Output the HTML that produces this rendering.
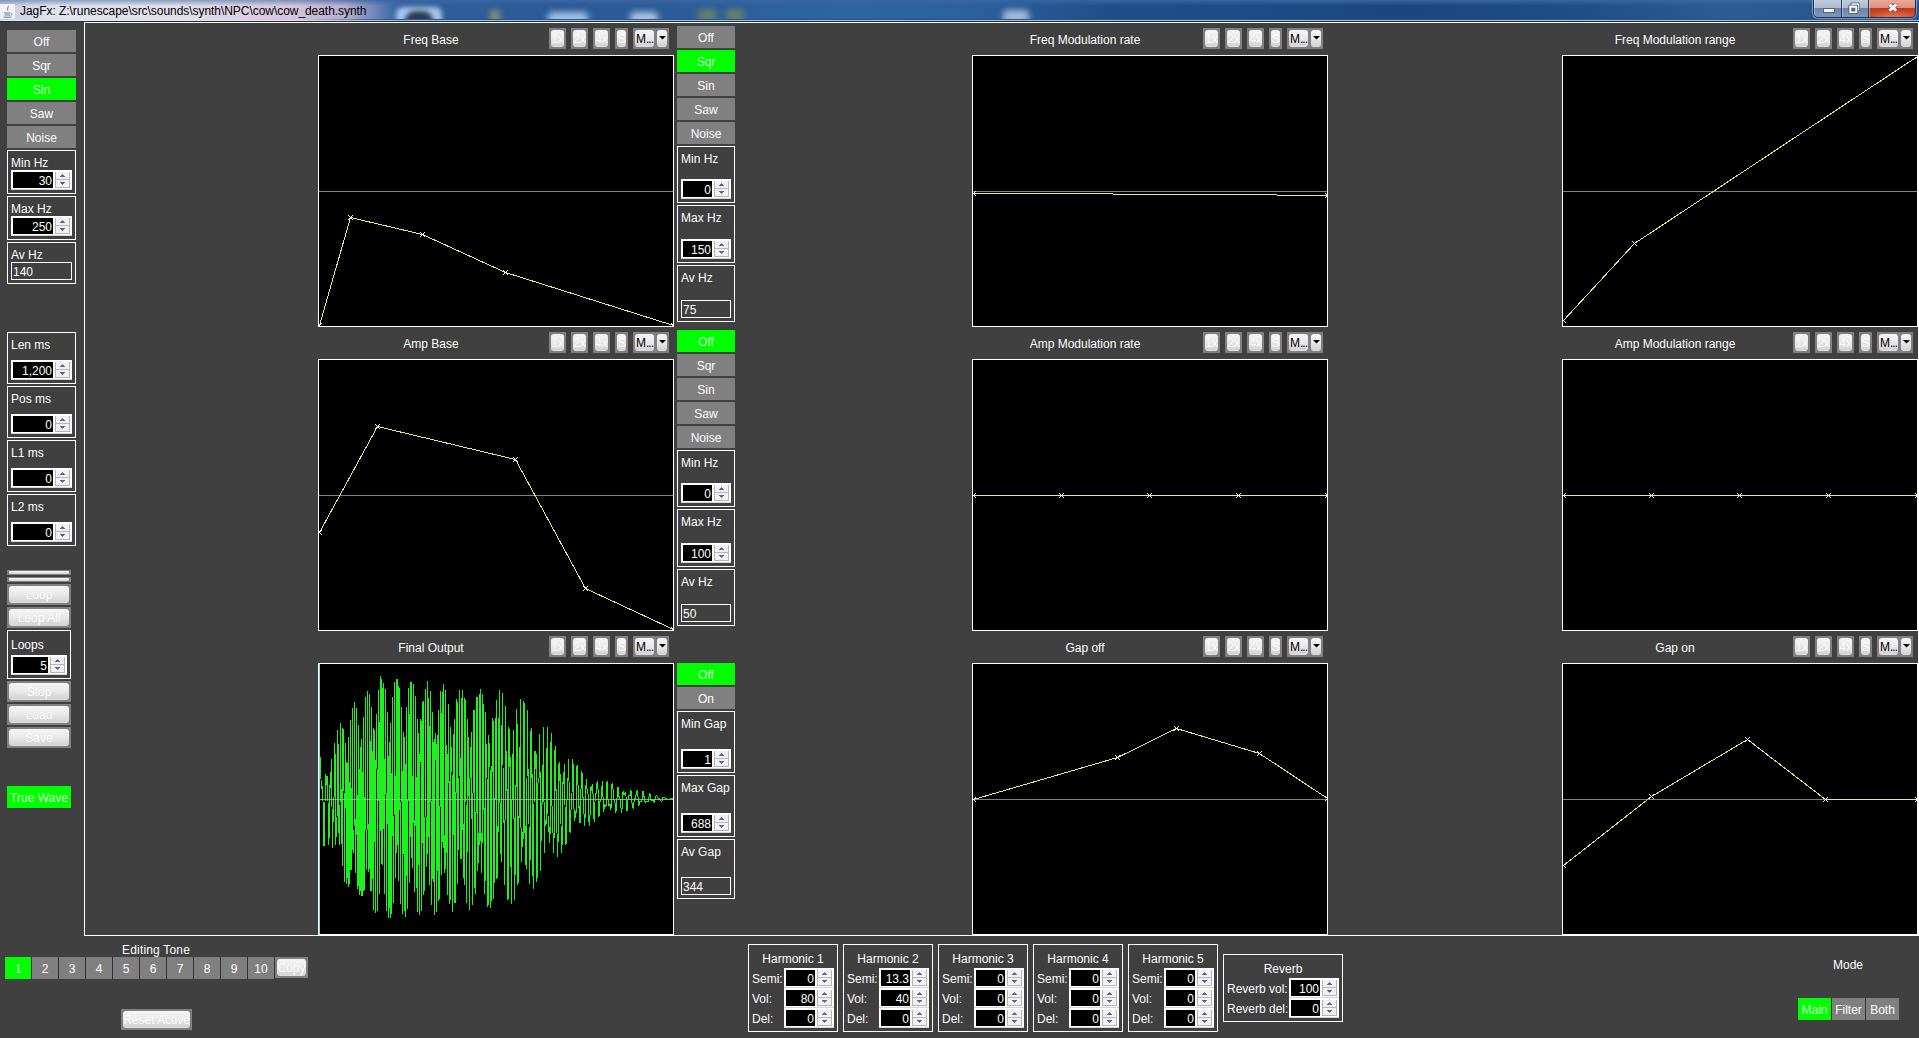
<!DOCTYPE html><html><head><meta charset="utf-8"><title>JagFx</title><style>
*{box-sizing:border-box;margin:0;padding:0}
html,body{width:1919px;height:1038px;overflow:hidden;background:#404040}
body{position:relative;font-family:"Liberation Sans",sans-serif;font-size:12px;color:#fff;line-height:14px}
.a{position:absolute}
.btn{position:absolute;background:#808080;color:#fff;text-align:center;height:22px;line-height:25px;font-size:12px}
.on{background:#00ff00;color:#c8ffc8}
.box{position:absolute;border:1px solid #fff}
.lbl{position:absolute;white-space:nowrap;font-size:12px;line-height:14px;color:#fff}
.sp{position:absolute;height:20px;background:#fff;border-bottom:1px solid #d6d6d6}
.sp .f{position:absolute;left:2px;top:2px;height:16px;background:#000;color:#fff;text-align:right;padding-right:1px;line-height:19px;font-size:12px}
.sp .b{position:absolute;top:2px;width:15px;height:16px;background:#f1f1f6;border-left:1px solid #b4b4b4;border-right:1px solid #b4b4b4;border-bottom:1px solid #b4b4b4}
.sp .b i{position:absolute;left:0;right:0;top:7px;height:1px;background:#b8b8b8}
.sp .b u{position:absolute;left:6px;top:2px;width:1px;height:1px;background:#8484b0;box-shadow:-1px 1px #62629a,0 1px #62629a,1px 1px #62629a,-2px 2px #62629a,-1px 2px #62629a,0 2px #62629a,1px 2px #62629a,2px 2px #62629a}
.sp .b s{position:absolute;left:6px;top:12px;width:1px;height:1px;background:#8484b0;box-shadow:-1px -1px #62629a,0 -1px #62629a,1px -1px #62629a,-2px -2px #62629a,-1px -2px #62629a,0 -2px #62629a,1px -2px #62629a,2px -2px #62629a}
.tf{position:absolute;border:1px solid #fff;height:18px;line-height:19px;padding-left:1px;font-size:12px;color:#fff}
.nb{position:absolute;background:#808080}
.nb b{position:absolute;left:2px;top:2px;right:2px;bottom:2px;border-radius:3px;background:linear-gradient(#f6f6f6,#e9e9e9 50%,#d4d4d4 90%,#e2e2e2);color:#fff;font-weight:normal;text-align:center;font-size:12px;white-space:nowrap;overflow:hidden;text-shadow:0 0 1px #d0d0d0}
.g{position:absolute;width:356px;height:272px;border:1px solid #fff;background:#000;overflow:hidden}
.g svg{position:absolute;left:0;top:0}
.ttl{position:absolute;width:226px;text-align:center;font-size:12px;line-height:14px;white-space:nowrap}
</style></head><body>
<svg width="0" height="0" style="position:absolute"><defs><g id="xm" fill="#fff" shape-rendering="crispEdges"><rect x="-2" y="-2" width="1" height="1"/><rect x="-1" y="-1" width="1" height="1"/><rect x="0" y="0" width="1" height="1"/><rect x="1" y="1" width="1" height="1"/><rect x="2" y="2" width="1" height="1"/><rect x="2" y="-2" width="1" height="1"/><rect x="1" y="-1" width="1" height="1"/><rect x="-1" y="1" width="1" height="1"/><rect x="-2" y="2" width="1" height="1"/></g></defs></svg>
<div class="a" style="left:0;top:0;width:1919px;height:20px;overflow:hidden;background:linear-gradient(90deg,#c3cbde 0,#dfe2ec 50px,#e1dfea 180px,#d6c6da 290px,#b9aed0 345px,#6f86b8 375px,#2f5f9d 400px,#2a5a98 560px,#2b5d9b 700px,#2f65a3 850px,#2c609e 970px,#1f4f8b 1110px,#1a477f 1400px,#1d4b84 1550px,#2b5b93 1720px,#26548b 1919px)">
<div class="a" style="left:0;top:0;width:1919px;height:6px;background:linear-gradient(rgba(58,102,162,.95),rgba(58,102,162,0));-webkit-mask-image:linear-gradient(90deg,rgba(0,0,0,.55) 0,rgba(0,0,0,.6) 300px,#000 400px)"></div>
<div class="a" style="left:396px;top:7px;width:46px;height:20px;border-radius:7px;background:#a9c6ea;filter:blur(2.5px)"></div>
<div class="a" style="left:405px;top:11px;width:28px;height:16px;border-radius:10px 10px 0 0;background:#2c3a52;filter:blur(2.5px)"></div>
<div class="a" style="left:490px;top:10px;width:10px;height:14px;background:#a9a36a;filter:blur(3px);opacity:.7"></div>
<div class="a" style="left:548px;top:12px;width:40px;height:14px;border-radius:4px;background:#9dc0e6;filter:blur(3px)"></div>
<div class="a" style="left:630px;top:12px;width:28px;height:14px;border-radius:5px;background:#c4d6ea;filter:blur(3px);opacity:.85"></div>
<div class="a" style="left:698px;top:9px;width:18px;height:14px;background:#7d9250;filter:blur(3px);opacity:.65"></div>
<div class="a" style="left:726px;top:9px;width:18px;height:14px;background:#7d9250;filter:blur(3px);opacity:.65"></div>
<div class="a" style="left:1003px;top:10px;width:26px;height:14px;border-radius:4px;background:#bfd4e2;filter:blur(3px);opacity:.8"></div>
</div>
<div class="a" style="left:0;top:19px;width:1919px;height:1px;background:linear-gradient(90deg,rgba(42,85,134,0) 0,rgba(42,85,134,0) 300px,#2a5586 400px)"></div>
<div class="a" style="left:0;top:20px;width:1919px;height:1px;background:linear-gradient(90deg,#e9e9f1 0,#e6e0ec 280px,#9fc0e2 400px)"></div>
<div class="a" style="left:0;top:21px;width:1919px;height:1px;background:#1e2c3e"></div>
<div class="a" style="left:-1px;top:4px;width:16px;height:15px;background:#f1f4f6;border-radius:1px"></div>
<svg class="a" style="left:1px;top:5px" width="13" height="14" viewBox="0 0 13 14"><path d="M7 1c1.5 1.5-2 2.5 0 4.5" stroke="#e0762c" stroke-width="1.2" fill="none"/><path d="M3 8h6.5M3.5 10h5.5M2.5 12.2h8" stroke="#5a7fa8" stroke-width="1" fill="none"/><path d="M10 8.5c1.5 0 1.5 2-0.5 2" stroke="#5a7fa8" stroke-width=".8" fill="none"/></svg>
<div class="a" style="left:20px;top:4px;font-size:12px;line-height:15px;color:#000;white-space:nowrap;letter-spacing:-0.05px">JagFx: Z:\runescape\src\sounds\synth\NPC\cow\cow_death.synth</div>
<div class="a" style="left:1813px;top:-3px;width:103px;height:21px;border:1px solid #1c2e48;border-radius:0 0 5px 5px;overflow:hidden;box-shadow:0 0 0 1px rgba(190,210,235,.55)">
<div class="a" style="left:0;top:0;width:28px;height:20px;background:linear-gradient(#c6d0e0 0,#aab9ce 10px,#6b83a6 10px,#8098bb 19px);border-right:1px solid #263a58;box-shadow:inset 1px 0 rgba(255,255,255,.35),inset 0 -1px rgba(255,255,255,.25)"></div>
<div class="a" style="left:28px;top:0;width:27px;height:20px;background:linear-gradient(#c6d0e0 0,#aab9ce 10px,#6b83a6 10px,#8098bb 19px);border-right:1px solid #263a58;box-shadow:inset 1px 0 rgba(255,255,255,.35),inset 0 -1px rgba(255,255,255,.25)"></div>
<div class="a" style="left:55px;top:0;width:48px;height:20px;background:radial-gradient(ellipse 22px 9px at 50% 100%,rgba(255,150,110,.55),rgba(255,150,110,0)),linear-gradient(#ecb2a4 0,#dc8c7b 10px,#c0391f 10px,#cf5436 19px);box-shadow:inset 1px 0 rgba(255,255,255,.35),inset 0 -1px rgba(255,255,255,.25)"></div>
<div class="a" style="left:9px;top:10px;width:12px;height:5px;background:#f4f6fa;border:1px solid #55657e"></div>
<svg class="a" style="left:33px;top:3px" width="16" height="14" viewBox="0 0 16 14"><rect x="3.5" y="1.5" width="9" height="8.5" rx="1" fill="#4a5a72"/><rect x="4.3" y="2.2" width="7.6" height="7.2" rx=".6" fill="#f4f6fa"/><rect x="1.5" y="3.8" width="9.6" height="9" rx="1" fill="#4a5a72"/><rect x="2.3" y="4.6" width="8" height="7.4" rx=".5" fill="#f4f6fa"/><rect x="4.3" y="6.8" width="4" height="3.6" fill="#5a6a82"/></svg>
<svg class="a" style="left:72px;top:4px" width="14" height="12" viewBox="0 0 14 12"><path d="M3.4 2.6L10.2 8.6M10.2 2.6L3.4 8.6" stroke="#5a2a24" stroke-width="4.4" fill="none" opacity=".7"/><path d="M3.4 2.6L10.2 8.6M10.2 2.6L3.4 8.6" stroke="#fafafa" stroke-width="3" fill="none"/></svg>
</div>
<div class="btn" style="left:7px;top:30px;width:69px">Off</div>
<div class="btn" style="left:7px;top:54px;width:69px">Sqr</div>
<div class="btn on" style="left:7px;top:78px;width:69px">Sin</div>
<div class="btn" style="left:7px;top:102px;width:69px">Saw</div>
<div class="btn" style="left:7px;top:126px;width:69px">Noise</div>
<div class="box" style="left:7px;top:150px;width:69px;height:44px"></div>
<div class="lbl" style="left:11px;top:156px;">Min Hz</div>
<div class="sp" style="left:11px;top:170px;width:61px"><div class="f" style="width:40px">30</div><div class="b" style="left:44px"><i></i><u></u><s></s></div></div>
<div class="box" style="left:7px;top:196px;width:69px;height:44px"></div>
<div class="lbl" style="left:11px;top:202px;">Max Hz</div>
<div class="sp" style="left:11px;top:216px;width:61px"><div class="f" style="width:40px">250</div><div class="b" style="left:44px"><i></i><u></u><s></s></div></div>
<div class="box" style="left:7px;top:242px;width:69px;height:42px"></div>
<div class="lbl" style="left:11px;top:248px;">Av Hz</div>
<div class="tf" style="left:11px;top:262px;width:61px">140</div>
<div class="box" style="left:7px;top:332px;width:69px;height:52px"></div>
<div class="lbl" style="left:11px;top:338px;">Len ms</div>
<div class="sp" style="left:11px;top:360px;width:61px"><div class="f" style="width:40px">1,200</div><div class="b" style="left:44px"><i></i><u></u><s></s></div></div>
<div class="box" style="left:7px;top:386px;width:69px;height:52px"></div>
<div class="lbl" style="left:11px;top:392px;">Pos ms</div>
<div class="sp" style="left:11px;top:414px;width:61px"><div class="f" style="width:40px">0</div><div class="b" style="left:44px"><i></i><u></u><s></s></div></div>
<div class="box" style="left:7px;top:440px;width:69px;height:52px"></div>
<div class="lbl" style="left:11px;top:446px;">L1 ms</div>
<div class="sp" style="left:11px;top:468px;width:61px"><div class="f" style="width:40px">0</div><div class="b" style="left:44px"><i></i><u></u><s></s></div></div>
<div class="box" style="left:7px;top:494px;width:69px;height:52px"></div>
<div class="lbl" style="left:11px;top:500px;">L2 ms</div>
<div class="sp" style="left:11px;top:522px;width:61px"><div class="f" style="width:40px">0</div><div class="b" style="left:44px"><i></i><u></u><s></s></div></div>
<div class="nb" style="left:7px;top:570px;width:64px;height:5px"><b style="left:2px;top:1px;right:2px;bottom:1px;border-radius:1px"></b></div>
<div class="nb" style="left:7px;top:577px;width:64px;height:5px"><b style="left:2px;top:1px;right:2px;bottom:1px;border-radius:1px"></b></div>
<div class="nb" style="left:7px;top:584px;width:64px;height:21px"><b style="line-height:19px;">Loop</b></div>
<div class="nb" style="left:7px;top:607px;width:64px;height:21px"><b style="line-height:19px;">Loop All</b></div>
<div class="box" style="left:7px;top:630px;width:64px;height:49px"></div>
<div class="lbl" style="left:11px;top:638px;">Loops</div>
<div class="sp" style="left:11px;top:655px;width:56px"><div class="f" style="width:35px">5</div><div class="b" style="left:39px"><i></i><u></u><s></s></div></div>
<div class="nb" style="left:7px;top:681px;width:64px;height:21px"><b style="line-height:19px;">Stop</b></div>
<div class="nb" style="left:7px;top:704px;width:64px;height:21px"><b style="line-height:19px;">Load</b></div>
<div class="nb" style="left:7px;top:727px;width:64px;height:21px"><b style="line-height:19px;">Save</b></div>
<div class="btn on" style="left:7px;top:786px;width:64px">True Wave</div>
<div class="a" style="left:84px;top:22px;width:1835px;height:914px;border:1px solid #fff"></div>
<div class="ttl" style="left:318px;top:33px">Freq Base</div>
<div class="nb" style="left:549px;top:28px;width:17px;height:21px"><b style="line-height:19px;">1x</b></div>
<div class="nb" style="left:571px;top:28px;width:17px;height:21px"><b style="line-height:19px;">2x</b></div>
<div class="nb" style="left:593px;top:28px;width:17px;height:21px"><b style="line-height:19px;">4x</b></div>
<div class="nb" style="left:615px;top:28px;width:13px;height:21px"><b style="line-height:19px;">S</b></div>
<div class="nb" style="left:633px;top:28px;width:36px;height:21px"><b style="right:auto;width:19px;color:#000;text-shadow:none;text-align:left;padding-left:1px;line-height:19px;border-radius:3px">M<span style="letter-spacing:-1px">...</span></b><b style="left:24px;right:2px;border-radius:3px"></b><svg class="a" style="left:26px;top:8px" width="7" height="4" viewBox="0 0 7 4"><path d="M0 0h7L3.5 3.6z" fill="#000"/></svg></div>
<div class="g" style="left:318px;top:55px"><svg width="354" height="270" viewBox="0 0 354 270" shape-rendering="crispEdges"><path d="M0 135.5H354" stroke="#808080" stroke-width="1"/><polyline points="0.5,269.5 31.5,161.5 103.5,178.5 186.5,216.5 354.5,269.5" fill="none" stroke="#e8e888" stroke-width="1"/><use href="#xm" x="0" y="269"/><use href="#xm" x="31" y="161"/><use href="#xm" x="103" y="178"/><use href="#xm" x="186" y="216"/><use href="#xm" x="354" y="269"/></svg></div>
<div class="ttl" style="left:972px;top:33px">Freq Modulation rate</div>
<div class="nb" style="left:1203px;top:28px;width:17px;height:21px"><b style="line-height:19px;">1x</b></div>
<div class="nb" style="left:1225px;top:28px;width:17px;height:21px"><b style="line-height:19px;">2x</b></div>
<div class="nb" style="left:1247px;top:28px;width:17px;height:21px"><b style="line-height:19px;">4x</b></div>
<div class="nb" style="left:1269px;top:28px;width:13px;height:21px"><b style="line-height:19px;">S</b></div>
<div class="nb" style="left:1287px;top:28px;width:36px;height:21px"><b style="right:auto;width:19px;color:#000;text-shadow:none;text-align:left;padding-left:1px;line-height:19px;border-radius:3px">M<span style="letter-spacing:-1px">...</span></b><b style="left:24px;right:2px;border-radius:3px"></b><svg class="a" style="left:26px;top:8px" width="7" height="4" viewBox="0 0 7 4"><path d="M0 0h7L3.5 3.6z" fill="#000"/></svg></div>
<div class="g" style="left:972px;top:55px"><svg width="354" height="270" viewBox="0 0 354 270" shape-rendering="crispEdges"><path d="M0 135.5H354" stroke="#808080" stroke-width="1"/><polyline points="0.5,137.15 354.5,139.32" fill="none" stroke="#e8e888" stroke-width="1"/><use href="#xm" x="0" y="137"/><use href="#xm" x="354" y="139"/></svg></div>
<div class="ttl" style="left:1562px;top:33px">Freq Modulation range</div>
<div class="nb" style="left:1793px;top:28px;width:17px;height:21px"><b style="line-height:19px;">1x</b></div>
<div class="nb" style="left:1815px;top:28px;width:17px;height:21px"><b style="line-height:19px;">2x</b></div>
<div class="nb" style="left:1837px;top:28px;width:17px;height:21px"><b style="line-height:19px;">4x</b></div>
<div class="nb" style="left:1859px;top:28px;width:13px;height:21px"><b style="line-height:19px;">S</b></div>
<div class="nb" style="left:1877px;top:28px;width:36px;height:21px"><b style="right:auto;width:19px;color:#000;text-shadow:none;text-align:left;padding-left:1px;line-height:19px;border-radius:3px">M<span style="letter-spacing:-1px">...</span></b><b style="left:24px;right:2px;border-radius:3px"></b><svg class="a" style="left:26px;top:8px" width="7" height="4" viewBox="0 0 7 4"><path d="M0 0h7L3.5 3.6z" fill="#000"/></svg></div>
<div class="g" style="left:1562px;top:55px"><svg width="354" height="270" viewBox="0 0 354 270" shape-rendering="crispEdges"><path d="M0 135.5H354" stroke="#808080" stroke-width="1"/><polyline points="0.5,264.5 71.5,187.5 354.5,0.5" fill="none" stroke="#e8e888" stroke-width="1"/><use href="#xm" x="0" y="264"/><use href="#xm" x="71" y="187"/><use href="#xm" x="354" y="0"/></svg></div>
<div class="ttl" style="left:318px;top:337px">Amp Base</div>
<div class="nb" style="left:549px;top:332px;width:17px;height:21px"><b style="line-height:19px;">1x</b></div>
<div class="nb" style="left:571px;top:332px;width:17px;height:21px"><b style="line-height:19px;">2x</b></div>
<div class="nb" style="left:593px;top:332px;width:17px;height:21px"><b style="line-height:19px;">4x</b></div>
<div class="nb" style="left:615px;top:332px;width:13px;height:21px"><b style="line-height:19px;">S</b></div>
<div class="nb" style="left:633px;top:332px;width:36px;height:21px"><b style="right:auto;width:19px;color:#000;text-shadow:none;text-align:left;padding-left:1px;line-height:19px;border-radius:3px">M<span style="letter-spacing:-1px">...</span></b><b style="left:24px;right:2px;border-radius:3px"></b><svg class="a" style="left:26px;top:8px" width="7" height="4" viewBox="0 0 7 4"><path d="M0 0h7L3.5 3.6z" fill="#000"/></svg></div>
<div class="g" style="left:318px;top:359px"><svg width="354" height="270" viewBox="0 0 354 270" shape-rendering="crispEdges"><path d="M0 135.5H354" stroke="#808080" stroke-width="1"/><polyline points="0.5,172.5 58.5,66.5 196.5,99.5 266.5,228.5 354.5,269.5" fill="none" stroke="#e8e888" stroke-width="1"/><use href="#xm" x="0" y="172"/><use href="#xm" x="58" y="66"/><use href="#xm" x="196" y="99"/><use href="#xm" x="266" y="228"/><use href="#xm" x="354" y="269"/></svg></div>
<div class="ttl" style="left:972px;top:337px">Amp Modulation rate</div>
<div class="nb" style="left:1203px;top:332px;width:17px;height:21px"><b style="line-height:19px;">1x</b></div>
<div class="nb" style="left:1225px;top:332px;width:17px;height:21px"><b style="line-height:19px;">2x</b></div>
<div class="nb" style="left:1247px;top:332px;width:17px;height:21px"><b style="line-height:19px;">4x</b></div>
<div class="nb" style="left:1269px;top:332px;width:13px;height:21px"><b style="line-height:19px;">S</b></div>
<div class="nb" style="left:1287px;top:332px;width:36px;height:21px"><b style="right:auto;width:19px;color:#000;text-shadow:none;text-align:left;padding-left:1px;line-height:19px;border-radius:3px">M<span style="letter-spacing:-1px">...</span></b><b style="left:24px;right:2px;border-radius:3px"></b><svg class="a" style="left:26px;top:8px" width="7" height="4" viewBox="0 0 7 4"><path d="M0 0h7L3.5 3.6z" fill="#000"/></svg></div>
<div class="g" style="left:972px;top:359px"><svg width="354" height="270" viewBox="0 0 354 270" shape-rendering="crispEdges"><path d="M0 135.5H354" stroke="#808080" stroke-width="1"/><polyline points="0.5,135.5 88.5,135.5 176.5,135.5 265.5,135.5 354.5,135.5" fill="none" stroke="#e8e888" stroke-width="1"/><use href="#xm" x="0" y="135"/><use href="#xm" x="88" y="135"/><use href="#xm" x="176" y="135"/><use href="#xm" x="265" y="135"/><use href="#xm" x="354" y="135"/></svg></div>
<div class="ttl" style="left:1562px;top:337px">Amp Modulation range</div>
<div class="nb" style="left:1793px;top:332px;width:17px;height:21px"><b style="line-height:19px;">1x</b></div>
<div class="nb" style="left:1815px;top:332px;width:17px;height:21px"><b style="line-height:19px;">2x</b></div>
<div class="nb" style="left:1837px;top:332px;width:17px;height:21px"><b style="line-height:19px;">4x</b></div>
<div class="nb" style="left:1859px;top:332px;width:13px;height:21px"><b style="line-height:19px;">S</b></div>
<div class="nb" style="left:1877px;top:332px;width:36px;height:21px"><b style="right:auto;width:19px;color:#000;text-shadow:none;text-align:left;padding-left:1px;line-height:19px;border-radius:3px">M<span style="letter-spacing:-1px">...</span></b><b style="left:24px;right:2px;border-radius:3px"></b><svg class="a" style="left:26px;top:8px" width="7" height="4" viewBox="0 0 7 4"><path d="M0 0h7L3.5 3.6z" fill="#000"/></svg></div>
<div class="g" style="left:1562px;top:359px"><svg width="354" height="270" viewBox="0 0 354 270" shape-rendering="crispEdges"><path d="M0 135.5H354" stroke="#808080" stroke-width="1"/><polyline points="0.5,135.5 88.5,135.5 176.5,135.5 265.5,135.5 354.5,135.5" fill="none" stroke="#e8e888" stroke-width="1"/><use href="#xm" x="0" y="135"/><use href="#xm" x="88" y="135"/><use href="#xm" x="176" y="135"/><use href="#xm" x="265" y="135"/><use href="#xm" x="354" y="135"/></svg></div>
<div class="ttl" style="left:318px;top:641px">Final Output</div>
<div class="nb" style="left:549px;top:636px;width:17px;height:21px"><b style="line-height:19px;">1x</b></div>
<div class="nb" style="left:571px;top:636px;width:17px;height:21px"><b style="line-height:19px;">2x</b></div>
<div class="nb" style="left:593px;top:636px;width:17px;height:21px"><b style="line-height:19px;">4x</b></div>
<div class="nb" style="left:615px;top:636px;width:13px;height:21px"><b style="line-height:19px;">S</b></div>
<div class="nb" style="left:633px;top:636px;width:36px;height:21px"><b style="right:auto;width:19px;color:#000;text-shadow:none;text-align:left;padding-left:1px;line-height:19px;border-radius:3px">M<span style="letter-spacing:-1px">...</span></b><b style="left:24px;right:2px;border-radius:3px"></b><svg class="a" style="left:26px;top:8px" width="7" height="4" viewBox="0 0 7 4"><path d="M0 0h7L3.5 3.6z" fill="#000"/></svg></div>
<div class="g" style="left:318px;top:663px"><svg width="354" height="270" viewBox="0 0 354 270" shape-rendering="crispEdges"><path d="M0 135.5H354" stroke="#808080" stroke-width="1"/><polyline points="0.00,120.4 0.17,112.0 0.33,104.8 0.50,99.1 0.67,95.1 0.83,92.9 1.00,92.6 1.17,94.1 1.33,97.1 1.50,101.1 1.67,105.9 1.83,110.7 2.00,115.3 2.17,119.1 2.33,122.0 2.50,123.7 2.67,124.2 2.83,124.0 3.00,123.2 3.17,122.5 3.33,122.5 3.50,123.6 3.67,126.3 3.83,130.9 4.00,137.4 4.17,145.5 4.33,154.5 4.50,163.6 4.67,171.8 4.83,178.0 5.00,181.4 5.17,181.4 5.33,177.8 5.50,170.7 5.67,161.0 5.83,149.8 6.00,138.3 6.17,127.7 6.33,119.1 6.50,113.2 6.67,110.4 6.83,110.3 7.00,112.2 7.17,115.2 7.33,118.2 7.50,120.1 7.67,120.4 7.83,119.1 8.00,116.6 8.17,113.6 8.33,111.8 8.50,112.6 8.67,116.9 8.83,125.2 9.00,136.8 9.17,150.2 9.33,163.5 9.50,174.2 9.67,180.2 9.83,180.6 10.00,175.4 10.17,165.7 10.33,153.5 10.50,141.2 10.67,131.0 10.83,124.3 11.00,121.5 11.17,121.7 11.33,123.0 11.50,123.4 11.67,121.2 11.83,115.6 12.00,107.7 12.17,99.8 12.33,95.3 12.50,97.0 12.67,106.3 12.83,122.7 13.00,143.0 13.17,162.9 13.33,177.6 13.50,184.1 13.67,181.4 13.83,172.1 14.00,159.5 14.17,147.7 14.33,139.7 14.50,136.5 14.67,136.7 14.83,137.0 15.00,134.0 15.17,125.2 15.33,111.2 15.50,95.2 15.67,82.5 15.83,78.8 16.00,88.0 16.17,108.8 16.33,135.8 16.50,160.9 16.67,177.1 16.83,181.1 17.00,174.7 17.17,163.9 17.33,155.2 17.50,152.6 17.67,155.1 17.83,157.5 18.00,153.9 18.17,140.3 18.33,117.5 18.50,91.6 18.67,71.7 18.83,65.6 19.00,76.7 19.17,101.5 19.33,131.2 19.50,155.6 19.67,168.5 19.83,168.2 20.00,162.0 20.17,159.1 20.33,164.5 20.50,175.0 20.67,180.7 20.83,171.2 21.00,143.7 21.17,105.8 21.33,72.9 21.50,59.5 21.67,69.0 21.83,94.5 22.00,123.2 22.17,143.2 22.33,150.1 22.50,148.6 22.67,149.3 22.83,160.0 23.00,180.0 23.17,198.5 23.33,201.6 23.50,180.2 23.67,136.8 23.83,91.0 24.00,64.5 24.17,66.9 24.33,89.8 24.50,114.0 24.67,125.2 24.83,124.4 25.00,126.6 25.17,146.0 25.33,180.9 25.50,211.7 25.67,218.4 25.83,194.1 26.00,148.3 26.17,103.1 26.33,78.6 26.50,79.8 26.67,95.1 26.83,106.5 27.00,104.9 27.17,97.7 27.33,102.5 27.50,133.1 27.67,182.2 27.83,220.1 28.00,220.2 28.17,182.2 28.33,132.9 28.50,102.8 28.67,100.4 28.83,107.4 29.00,101.5 29.17,82.0 29.33,73.2 29.50,95.5 29.67,145.5 29.83,197.9 30.00,222.6 30.17,208.1 30.33,170.2 30.50,137.3 30.67,125.8 30.83,127.3 31.00,119.8 31.17,93.1 31.33,61.8 31.50,56.5 31.67,97.6 31.83,162.2 32.00,206.1 32.17,205.6 32.33,176.9 32.50,155.0 32.67,153.7 32.83,153.5 33.00,128.0 33.17,79.6 33.33,44.1 33.50,49.9 33.67,94.5 33.83,150.8 34.00,186.4 34.17,189.4 34.33,174.8 34.50,167.1 34.67,175.2 34.83,183.9 35.00,169.4 35.17,124.7 35.33,67.6 35.50,37.7 35.67,60.0 35.83,113.2 36.00,155.4 36.17,165.5 36.33,160.0 36.50,168.3 36.67,194.2 36.83,208.5 37.00,181.2 37.17,117.7 37.33,62.3 37.50,43.7 37.67,64.8 37.83,103.0 38.00,130.1 38.17,136.0 38.33,135.2 38.50,149.5 38.67,184.0 38.83,218.8 39.00,224.7 39.17,188.8 39.33,121.6 39.50,68.9 39.67,61.3 39.83,86.1 40.00,107.5 40.17,107.5 40.33,104.8 40.50,129.3 40.67,182.9 40.83,230.0 41.00,230.6 41.17,181.5 41.33,124.4 41.50,88.1 41.67,83.5 41.83,95.5 42.00,100.0 42.17,88.1 42.33,74.9 42.50,85.2 42.67,129.2 42.83,189.4 43.00,232.2 43.17,231.8 43.33,186.6 43.50,135.2 43.67,112.2 43.83,114.0 44.00,110.1 44.17,83.0 44.33,53.3 44.50,59.4 44.67,114.2 44.83,186.4 45.00,227.0 45.17,217.1 45.33,182.5 45.50,152.6 45.67,143.1 45.83,144.8 46.00,135.5 46.17,102.6 46.33,58.5 46.50,32.8 46.67,48.7 46.83,102.6 47.00,165.6 47.17,206.4 47.33,202.7 47.50,178.0 47.67,167.4 47.83,175.4 48.00,172.8 48.17,133.2 48.33,69.3 48.50,26.6 48.67,40.4 48.83,100.1 49.00,159.6 49.17,182.0 49.33,178.1 49.50,170.0 49.67,176.8 49.83,196.9 50.00,207.9 50.17,186.9 50.33,132.1 50.50,68.2 50.67,29.8 50.83,35.7 51.00,77.1 51.17,127.7 51.33,149.6 51.50,148.2 51.67,156.3 51.83,190.5 52.00,227.0 52.17,223.6 52.33,166.3 52.50,88.7 52.67,42.9 52.83,51.2 53.00,86.8 53.17,111.8 53.33,116.9 53.50,114.2 53.67,126.3 53.83,164.3 54.00,214.5 54.17,246.3 54.33,235.5 54.50,183.8 54.67,118.6 54.83,73.2 55.00,64.4 55.17,84.3 55.33,96.9 55.50,87.2 55.67,80.2 55.83,110.3 56.00,177.5 56.17,239.5 56.33,249.1 56.50,200.7 56.67,134.8 56.83,97.4 57.00,95.8 57.17,102.4 57.33,95.2 57.50,71.5 57.67,50.5 57.83,58.3 58.00,104.9 58.17,173.5 58.33,230.0 58.50,246.7 58.67,221.2 58.83,176.2 59.00,137.4 59.17,129.7 59.33,129.5 59.50,104.4 59.67,56.3 59.83,25.9 60.00,51.5 60.17,126.8 60.33,201.9 60.50,229.7 60.67,207.5 60.83,174.2 61.00,162.6 61.17,166.5 61.33,165.7 61.50,140.2 61.67,89.2 61.83,36.0 62.00,12.1 62.17,35.0 62.33,93.9 62.50,157.6 62.67,196.0 62.83,199.5 63.00,181.8 63.17,178.1 63.33,195.3 63.50,201.3 63.67,162.5 63.83,87.0 64.00,23.9 64.17,18.6 64.33,70.1 64.50,133.3 64.67,165.0 64.83,164.6 65.00,162.2 65.17,176.6 65.33,206.2 65.50,229.6 65.67,221.8 65.83,174.5 66.00,104.9 66.17,46.1 66.33,24.7 66.50,44.2 66.67,84.3 66.83,120.9 67.00,129.7 67.17,129.2 67.33,153.6 67.50,205.9 67.67,247.3 67.83,234.7 68.00,166.4 68.17,87.3 68.33,48.3 68.50,60.3 68.67,89.9 68.83,100.7 69.00,95.3 69.17,91.6 69.33,110.3 69.50,157.0 69.67,214.7 69.83,253.6 70.00,251.1 70.17,207.5 70.33,146.1 70.50,97.2 70.67,78.3 70.83,87.4 71.00,95.1 71.17,79.3 71.33,59.1 71.50,74.1 71.67,137.6 71.83,215.4 72.00,253.9 72.17,229.9 72.33,170.8 72.50,125.0 72.67,114.1 72.83,117.1 73.00,110.6 73.17,85.2 73.33,51.1 73.50,32.7 73.67,50.2 73.83,104.1 74.00,172.4 74.17,224.1 74.33,238.6 74.50,217.6 74.67,178.7 74.83,152.6 75.00,151.9 75.17,148.1 75.33,112.3 75.50,54.0 75.67,17.7 75.83,40.3 76.00,112.5 76.17,184.9 76.33,213.7 76.50,199.0 76.67,179.0 76.83,174.0 77.00,182.8 77.17,188.6 77.33,171.7 77.50,126.2 77.67,67.1 77.83,22.3 78.00,15.0 78.17,48.6 78.33,104.3 78.50,154.3 78.67,180.7 78.83,175.3 79.00,171.5 79.17,191.3 79.33,216.9 79.50,208.8 79.67,149.9 79.83,70.2 80.00,22.5 80.17,34.9 80.33,86.6 80.50,130.9 80.67,144.4 80.83,143.3 81.00,146.2 81.17,167.1 81.33,203.3 81.50,235.3 81.67,239.6 81.83,205.6 82.00,143.7 82.17,80.7 82.33,43.2 82.50,43.3 82.67,76.9 82.83,106.0 83.00,109.8 83.17,107.2 83.33,131.6 83.50,188.8 83.67,243.3 83.83,249.6 84.00,196.8 84.17,121.0 84.33,72.1 84.50,67.9 84.67,82.7 84.83,94.0 85.00,90.3 85.17,77.1 85.33,72.7 85.50,94.1 85.67,143.3 85.83,203.0 86.00,246.5 86.17,253.3 86.33,222.1 86.50,161.0 86.67,111.8 86.83,99.6 87.00,105.7 87.17,96.6 87.33,65.6 87.50,43.4 87.67,66.6 87.83,136.7 88.00,212.4 88.17,245.0 88.33,221.3 88.50,181.2 88.67,149.3 88.83,136.5 89.00,137.2 89.17,134.7 89.33,114.6 89.50,77.3 89.67,39.3 89.83,23.7 90.00,44.6 90.17,97.7 90.33,163.0 90.50,216.5 90.67,219.1 90.83,190.0 91.00,168.0 91.17,169.5 91.33,173.0 91.50,146.2 91.67,85.8 91.83,28.3 92.00,18.3 92.17,66.6 92.33,133.4 92.50,177.3 92.67,194.3 92.83,188.6 93.00,177.2 93.17,176.1 93.33,189.1 93.50,204.4 93.67,203.0 93.83,172.8 94.00,118.3 94.17,59.8 94.33,20.1 94.50,31.6 94.67,86.0 94.83,138.8 95.00,159.3 95.17,156.5 95.33,162.7 95.50,193.7 95.67,227.6 95.83,224.8 96.00,169.4 96.17,90.1 96.33,42.1 96.50,31.6 96.67,52.0 96.83,86.0 97.00,113.3 97.17,123.6 97.33,122.2 97.50,124.5 97.67,144.3 97.83,182.4 98.00,224.4 98.17,248.4 98.33,229.1 98.50,161.4 98.67,89.1 98.83,55.3 99.00,66.2 99.17,91.0 99.33,98.1 99.50,88.3 99.67,92.0 99.83,134.0 100.00,201.4 100.17,249.4 100.33,250.9 100.50,217.6 100.67,165.2 100.83,117.0 101.00,90.1 101.17,86.7 101.33,94.9 101.50,98.2 101.67,87.5 101.83,67.9 102.00,55.5 102.17,69.8 102.33,129.1 102.50,204.3 102.67,247.1 102.83,233.1 103.00,182.1 103.17,136.5 103.33,121.3 103.50,123.4 103.67,111.8 103.83,75.1 104.00,38.1 104.17,36.8 104.33,70.6 104.50,127.4 104.67,185.9 104.83,224.0 105.00,230.8 105.17,211.4 105.33,182.5 105.50,161.3 105.67,155.2 105.83,158.2 106.00,155.7 106.17,128.1 106.33,73.0 106.50,26.3 106.67,26.6 106.83,80.2 107.00,152.7 107.17,199.4 107.33,202.8 107.50,183.4 107.67,174.0 107.83,184.6 108.00,192.5 108.17,177.0 108.33,137.5 108.50,84.6 108.67,38.1 108.83,17.3 109.00,30.5 109.17,70.3 109.33,118.5 109.50,155.9 109.67,172.5 109.83,171.5 110.00,166.1 110.17,174.2 110.33,201.5 110.50,221.2 110.67,201.1 110.83,138.1 111.00,65.5 111.17,27.5 111.33,42.0 111.50,87.7 111.67,126.4 111.83,138.1 112.00,136.5 112.17,142.9 112.33,165.0 112.50,198.9 112.67,230.0 112.83,241.2 113.00,222.4 113.17,176.6 113.33,119.4 113.50,71.4 113.67,47.6 113.83,50.9 114.00,75.5 114.17,101.6 114.33,106.6 114.50,101.3 114.67,114.2 114.83,159.6 115.00,218.3 115.17,250.6 115.33,230.6 115.50,169.2 115.67,105.9 115.83,75.2 116.00,77.4 116.17,89.1 116.33,96.0 116.50,91.2 116.67,78.2 116.83,69.0 117.00,77.1 117.17,108.6 117.33,157.6 117.50,208.5 117.67,242.7 117.83,248.1 118.00,212.3 118.17,156.1 118.33,116.5 118.50,107.3 118.67,111.5 118.83,102.4 119.00,73.0 119.17,45.7 119.33,52.6 119.50,104.3 119.67,176.8 119.83,227.7 120.00,237.1 120.17,220.9 120.33,190.7 120.50,162.0 120.67,145.4 120.83,142.1 121.00,143.8 121.17,138.6 121.33,118.7 121.50,85.5 121.67,50.1 121.83,27.0 122.00,42.9 122.17,102.0 122.33,170.8 122.50,211.3 122.67,210.4 122.83,186.5 123.00,169.4 123.17,171.7 123.33,178.2 123.50,162.2 123.67,113.9 123.83,61.2 124.00,28.3 124.17,20.4 124.33,41.0 124.50,82.4 124.67,129.3 124.83,166.2 125.00,184.2 125.17,184.5 125.33,176.3 125.50,171.4 125.67,177.0 125.83,195.7 126.00,208.5 126.17,188.3 126.33,131.6 126.50,65.0 126.67,26.5 126.83,36.0 127.00,80.7 127.17,127.4 127.33,150.3 127.50,150.9 127.67,151.9 127.83,165.1 128.00,189.3 128.17,215.6 128.33,231.0 128.50,224.6 128.67,193.7 128.83,145.3 129.00,94.0 129.17,55.3 129.33,39.6 129.50,47.4 129.67,71.7 129.83,104.4 130.00,118.5 130.17,116.6 130.33,121.1 130.50,150.5 130.67,199.5 130.83,239.1 131.00,239.7 131.17,195.0 131.33,129.1 131.50,78.2 131.67,63.4 131.83,70.9 132.00,85.6 132.17,96.5 132.33,97.7 132.50,90.6 132.67,83.5 132.83,86.8 133.00,107.5 133.17,144.8 133.33,189.6 133.50,228.2 133.67,248.4 133.83,227.9 134.00,175.1 134.17,122.6 134.33,96.3 134.50,96.7 134.67,103.1 134.83,94.9 135.00,71.7 135.17,55.1 135.33,70.0 135.50,121.5 135.67,174.9 135.83,216.4 136.00,238.7 136.17,236.8 136.33,214.7 136.50,182.7 136.67,153.0 136.83,134.3 137.00,128.2 137.17,129.3 137.33,128.6 137.50,118.5 137.67,87.7 137.83,50.1 138.00,34.9 138.17,60.8 138.33,120.6 138.50,184.2 138.67,220.0 138.83,216.9 139.00,189.9 139.17,165.4 139.33,159.0 139.50,163.2 139.67,161.1 139.83,146.3 140.00,117.6 140.17,80.4 140.33,46.0 140.50,26.0 140.67,28.4 140.83,53.6 141.00,94.5 141.17,138.9 141.33,174.6 141.50,195.3 141.67,192.6 141.83,177.8 142.00,172.9 142.17,183.7 142.33,195.0 142.50,184.0 142.67,141.1 142.83,80.9 143.00,34.2 143.17,26.3 143.33,58.9 143.50,103.0 143.67,136.4 143.83,157.9 144.00,165.5 144.17,163.7 144.33,160.5 144.50,163.5 144.67,175.9 144.83,195.2 145.00,213.5 145.17,221.1 145.33,210.8 145.50,169.6 145.67,105.9 145.83,52.5 146.00,34.5 146.17,54.3 146.33,92.1 146.50,122.1 146.67,132.0 146.83,130.4 147.00,137.6 147.17,165.7 147.33,206.7 147.50,231.2 147.67,238.5 147.83,225.0 148.00,192.3 148.17,148.3 148.33,104.3 148.50,71.2 148.67,55.5 148.83,57.4 149.00,71.3 149.17,88.5 149.33,101.4 149.50,104.0 149.67,97.7 149.83,102.2 150.00,132.0 150.17,182.2 150.33,229.2 150.50,246.2 150.67,222.1 150.83,169.6 151.00,116.3 151.17,86.1 151.33,83.0 151.50,90.0 151.67,97.2 151.83,98.1 152.00,91.0 152.17,78.8 152.33,68.7 152.50,68.5 152.67,83.6 152.83,114.3 153.00,155.3 153.17,196.9 153.33,233.3 153.50,241.4 153.67,212.7 153.83,167.1 154.00,129.9 154.17,115.0 154.33,116.3 154.50,115.7 154.67,99.1 154.83,69.4 155.00,45.9 155.17,50.1 155.33,78.3 155.50,118.0 155.67,162.1 155.83,200.3 156.00,224.1 156.17,229.7 156.33,218.7 156.50,197.6 156.67,174.6 156.83,157.0 157.00,148.4 157.17,147.6 157.33,149.3 157.50,138.9 157.67,107.5 157.83,64.5 158.00,33.0 158.17,34.1 158.33,72.0 158.50,130.3 158.67,181.9 158.83,206.5 159.00,201.8 159.17,183.8 159.33,173.1 159.50,169.4 159.67,172.7 159.83,179.1 160.00,182.1 160.17,175.4 160.33,155.9 160.50,124.8 160.67,87.7 160.83,53.3 161.00,30.3 161.17,25.5 161.33,53.2 161.50,102.9 161.67,149.9 161.83,175.2 162.00,177.1 162.17,169.5 162.33,169.7 162.50,184.4 162.67,204.0 162.83,209.3 163.00,185.7 163.17,144.1 163.33,103.2 163.50,65.6 163.67,39.5 163.83,30.3 164.00,38.5 164.17,60.1 164.33,88.2 164.50,114.8 164.67,134.2 164.83,143.8 165.00,145.5 165.17,143.7 165.33,150.6 165.50,174.3 165.67,207.1 165.83,229.6 166.00,223.3 166.17,184.1 166.33,126.0 166.50,73.6 166.67,47.7 166.83,53.4 167.00,78.5 167.17,97.6 167.33,109.8 167.50,114.4 167.67,113.3 167.83,110.9 168.00,113.1 168.17,124.1 168.33,145.2 168.50,173.9 168.67,204.5 168.83,229.5 169.00,242.5 169.17,230.1 169.33,186.9 169.50,132.0 169.67,88.7 169.83,71.1 170.00,77.1 170.17,91.7 170.33,98.6 170.50,92.3 170.67,81.4 170.83,82.4 171.00,103.1 171.17,132.1 171.33,167.7 171.50,202.9 171.67,230.1 171.83,243.5 172.00,240.3 172.17,222.0 172.33,193.4 172.50,161.3 172.67,132.7 172.83,112.5 173.00,101.8 173.17,103.7 173.33,107.6 173.50,100.3 173.67,80.2 173.83,59.1 174.00,54.5 174.17,78.1 174.33,126.8 174.50,182.9 174.67,223.9 174.83,234.7 175.00,222.3 175.17,201.3 175.33,177.1 175.50,155.9 175.67,141.5 175.83,135.0 176.00,134.4 176.17,135.7 176.33,133.9 176.50,125.5 176.67,109.3 176.83,87.1 177.00,54.5 177.17,35.6 177.33,45.8 177.50,85.6 177.67,140.8 177.83,189.5 178.00,214.6 178.17,212.1 178.33,192.2 178.50,171.5 178.67,162.4 178.83,164.8 179.00,168.1 179.17,167.4 179.33,158.9 179.50,141.0 179.67,114.9 179.83,84.5 180.00,55.7 180.17,34.8 180.33,26.5 180.50,33.0 180.67,53.3 180.83,89.6 181.00,139.3 181.17,176.1 181.33,190.0 181.50,185.0 181.67,174.4 181.83,171.4 182.00,180.5 182.17,194.0 182.33,197.5 182.50,179.0 182.67,138.0 182.83,95.0 183.00,63.0 183.17,39.7 183.33,29.0 183.50,32.6 183.67,48.7 183.83,73.4 184.00,101.2 184.17,126.5 184.33,145.3 184.50,155.8 184.67,158.8 184.83,156.4 185.00,156.1 185.17,167.6 185.33,190.5 185.50,213.6 185.67,221.4 185.83,203.3 186.00,160.7 186.17,107.3 186.33,62.5 186.50,41.6 186.67,48.5 186.83,65.6 187.00,85.4 187.17,104.0 187.33,117.6 187.50,124.9 187.67,126.6 187.83,125.3 188.00,125.0 188.17,129.1 188.33,140.1 188.50,158.0 188.67,182.3 188.83,216.7 189.00,235.8 189.17,227.9 189.33,192.7 189.50,142.3 189.67,95.3 189.83,67.1 190.00,63.1 190.17,76.5 190.33,93.8 190.50,102.9 190.67,101.4 190.83,97.0 191.00,93.4 191.17,94.5 191.33,103.1 191.50,120.4 191.67,145.3 191.83,174.4 192.00,203.1 192.17,226.3 192.33,239.5 192.50,240.4 192.67,223.7 192.83,184.4 193.00,139.6 193.17,105.4 193.33,90.5 193.50,92.3 193.67,99.8 193.83,101.3 194.00,91.7 194.17,75.7 194.33,65.7 194.50,73.8 194.67,94.8 194.83,122.3 195.00,154.5 195.17,186.5 195.33,213.3 195.50,230.7 195.67,236.4 195.83,230.3 196.00,214.3 196.17,192.3 196.33,168.7 196.50,147.8 196.67,127.0 196.83,121.2 197.00,123.0 197.17,121.0 197.33,107.3 197.50,82.7 197.67,57.2 197.83,45.0 198.00,56.5 198.17,92.3 198.33,141.8 198.50,186.6 198.67,208.4 198.83,219.9 199.00,220.9 199.17,212.7 199.33,198.5 199.50,182.3 199.67,167.7 199.83,157.4 200.00,152.3 200.17,151.7 200.33,153.4 200.50,154.0 200.67,145.2 200.83,121.1 201.00,86.0 201.17,52.4 201.33,34.9 201.50,42.7 201.67,75.0 201.83,120.7 202.00,163.8 202.17,191.0 202.33,197.6 202.50,190.9 202.67,182.2 202.83,174.0 203.00,169.0 203.17,168.4 203.33,171.7 203.50,177.1 203.67,181.8 203.83,182.7 204.00,177.4 204.17,164.4 204.33,144.2 204.50,107.3 204.67,66.6 204.83,40.0 205.00,37.2 205.17,58.7 205.33,95.2 205.50,132.5 205.67,158.6 205.83,168.6 206.00,166.5 206.17,162.0 206.33,164.3 206.50,171.1 206.67,181.1 206.83,192.2 207.00,201.3 207.17,205.4 207.33,202.2 207.50,190.4 207.67,170.7 207.83,144.9 208.00,116.3 208.17,88.8 208.33,64.8 208.50,46.5 208.67,51.2 208.83,73.6 209.00,102.3 209.17,125.7 209.33,137.3 209.50,138.7 209.67,137.7 209.83,143.2 210.00,159.9 210.17,184.9 210.33,206.0 210.50,216.4 210.67,219.6 210.83,214.1 211.00,199.9 211.17,178.3 211.33,152.0 211.50,124.5 211.67,99.5 211.83,79.9 212.00,67.7 212.17,63.6 212.33,68.9 212.50,85.2 212.67,102.5 212.83,112.7 213.00,113.7 213.17,110.5 213.33,111.7 213.50,124.5 213.67,150.3 213.83,183.0 214.00,211.5 214.17,224.7 214.33,220.8 214.50,208.4 214.67,189.3 214.83,166.0 215.00,141.9 215.17,120.1 215.33,102.9 215.50,92.0 215.67,87.4 215.83,88.3 216.00,92.7 216.17,98.5 216.33,105.0 216.50,104.0 216.67,96.2 216.83,88.1 217.00,88.2 217.17,102.8 217.33,131.8 217.50,168.0 217.67,200.5 217.83,218.4 218.00,216.5 218.17,197.9 218.33,180.0 218.50,160.9 218.67,143.2 218.83,129.0 219.00,119.3 219.17,114.5 219.33,113.6 219.50,114.9 219.67,116.7 219.83,117.0 220.00,114.6 220.17,107.1 220.33,91.8 220.50,76.7 220.67,70.4 220.83,79.4 221.00,104.5 221.17,139.7 221.33,174.8 221.50,199.5 221.67,207.4 221.83,198.7 222.00,179.7 222.17,162.7 222.33,151.8 222.50,144.0 222.67,139.8 222.83,138.6 223.00,139.2 223.17,139.8 223.33,138.8 223.50,134.9 223.67,127.5 223.83,116.6 224.00,103.2 224.17,82.9 224.33,66.2 224.50,63.1 224.67,76.7 224.83,104.3 225.00,137.7 225.17,167.3 225.33,185.2 225.50,188.8 225.67,181.1 225.83,168.9 226.00,159.2 226.17,156.5 226.33,156.4 226.50,158.1 226.67,160.4 226.83,161.8 227.00,160.7 227.17,156.1 227.33,147.4 227.50,134.8 227.67,119.3 227.83,102.7 228.00,85.7 228.17,67.1 228.33,62.6 228.50,74.0 228.67,97.6 228.83,125.6 229.00,149.8 229.17,164.1 229.33,167.7 229.50,164.0 229.67,159.0 229.83,158.1 230.00,162.1 230.17,167.0 230.33,172.4 230.50,176.8 230.67,178.7 230.83,177.1 231.00,171.1 231.17,160.6 231.33,146.4 231.50,129.7 231.67,112.3 231.83,95.9 232.00,79.1 232.17,69.5 232.33,74.2 232.50,90.2 232.67,111.2 232.83,130.1 233.00,142.0 233.17,146.0 233.33,145.1 233.50,144.5 233.67,148.6 233.83,158.9 234.00,168.6 234.17,177.1 234.33,184.1 234.50,188.3 234.67,188.7 234.83,184.6 235.00,175.9 235.17,163.4 235.33,148.0 235.50,131.4 235.67,115.3 235.83,101.3 236.00,85.8 236.17,82.2 236.33,89.3 236.50,102.3 236.67,115.4 236.83,124.2 237.00,127.1 237.17,126.3 237.33,126.1 237.50,130.8 237.67,142.3 237.83,158.4 238.00,169.4 238.17,179.5 238.33,187.3 238.50,191.8 238.67,192.0 238.83,187.9 239.00,179.6 239.17,168.1 239.33,154.3 239.50,139.9 239.67,126.2 239.83,112.0 240.00,100.5 240.17,98.3 240.33,103.1 240.50,110.4 240.67,115.8 240.83,116.9 241.00,114.1 241.17,110.7 241.33,110.9 241.50,118.0 241.67,132.6 241.83,148.1 242.00,160.3 242.17,171.6 242.33,180.8 242.50,187.0 242.67,189.3 242.83,187.8 243.00,182.5 243.17,174.2 243.33,163.8 243.50,152.4 243.67,141.4 243.83,127.5 244.00,118.0 244.17,115.3 244.33,117.1 244.50,119.6 244.67,119.5 244.83,115.4 245.00,108.4 245.17,101.8 245.33,99.6 245.50,104.8 245.67,118.0 245.83,128.8 246.00,140.7 246.17,152.6 246.33,163.4 246.50,172.2 246.67,178.2 246.83,180.9 247.00,180.3 247.17,176.8 247.33,170.9 247.50,163.6 247.67,155.0 247.83,142.9 248.00,134.9 248.17,131.6 248.33,131.7 248.50,132.1 248.67,130.0 248.83,123.7 249.00,114.1 249.17,103.6 249.33,96.2 249.50,95.2 249.67,100.6 249.83,107.6 250.00,116.7 250.17,127.1 250.33,137.8 250.50,148.0 250.67,156.7 250.83,163.4 251.00,167.7 251.17,169.3 251.33,168.6 251.50,165.9 251.67,160.4 251.83,152.5 252.00,146.4 252.17,143.7 252.33,143.8 252.50,144.9 252.67,144.1 252.83,139.5 253.00,130.5 253.17,118.4 253.33,106.4 253.50,97.8 253.67,95.5 253.83,96.3 254.00,99.6 254.17,105.1 254.33,112.3 254.50,120.6 254.67,129.3 254.83,137.5 255.00,144.6 255.17,150.3 255.33,154.1 255.50,156.0 255.67,155.8 255.83,152.6 256.00,149.1 256.17,147.4 256.33,148.2 256.50,150.9 256.67,153.5 256.83,153.6 257.00,149.5 257.17,140.9 257.33,128.9 257.50,116.9 257.67,110.4 257.83,105.3 258.00,102.1 258.17,100.8 258.33,101.7 258.50,104.5 258.67,108.9 258.83,114.4 259.00,120.5 259.17,126.6 259.33,132.3 259.50,138.1 259.67,142.9 259.83,144.3 260.00,143.6 260.17,142.7 260.33,143.1 260.50,145.9 260.67,150.6 260.83,155.5 261.00,158.6 261.17,158.0 261.33,152.7 261.50,145.6 261.67,139.2 261.83,132.3 262.00,125.5 262.17,119.2 262.33,114.0 262.50,110.2 262.67,108.0 262.83,107.4 263.00,108.5 263.17,110.9 263.33,114.2 263.50,120.4 263.67,127.1 263.83,132.0 264.00,134.3 264.17,134.6 264.33,134.3 264.50,134.9 264.67,137.7 264.83,142.9 265.00,149.8 265.17,156.4 265.33,160.8 265.50,161.6 265.67,160.8 265.83,158.4 266.00,154.7 266.17,149.8 266.33,144.1 266.50,138.0 266.67,132.0 266.83,126.4 267.00,121.7 267.17,118.1 267.33,115.7 267.50,114.8 267.67,117.1 267.83,121.0 268.00,124.9 268.17,127.3 268.33,127.9 268.50,127.1 268.67,126.3 268.83,126.7 269.00,129.7 269.17,135.3 269.33,141.6 269.50,146.2 269.67,150.7 269.83,154.8 270.00,158.0 270.17,160.1 270.33,160.9 270.50,160.4 270.67,158.5 270.83,155.5 271.00,151.5 271.17,146.9 271.33,140.2 271.50,132.2 271.67,126.3 271.83,123.2 272.00,122.8 272.17,124.2 272.33,125.9 272.50,126.9 272.67,126.3 272.83,124.4 273.00,122.1 273.17,120.5 273.33,120.6 273.50,121.7 273.67,123.6 273.83,126.5 274.00,130.1 274.17,134.4 274.33,139.0 274.50,143.6 274.67,147.9 274.83,151.7 275.00,154.7 275.17,156.6 275.33,157.5 275.50,155.1 275.67,150.1 275.83,143.9 276.00,138.0 276.17,133.5 276.33,131.1 276.50,130.5 276.67,130.9 276.83,131.2 277.00,130.5 277.17,128.5 277.33,126.8 277.50,124.8 277.67,122.7 277.83,120.8 278.00,119.1 278.17,118.0 278.33,117.6 278.50,118.1 278.67,119.4 278.83,121.6 279.00,124.5 279.17,129.2 279.33,136.6 279.50,143.7 279.67,149.2 279.83,152.2 280.00,152.3 280.17,150.1 280.33,146.5 280.50,142.6 280.67,139.4 280.83,137.5 281.00,136.9 281.17,137.1 281.33,137.2 281.50,137.3 281.67,137.1 281.83,136.5 282.00,135.4 282.17,133.9 282.33,131.9 282.50,129.6 282.67,127.0 282.83,124.3 283.00,121.8 283.17,118.6 283.33,116.7 283.50,117.4 283.67,120.8 283.83,126.2 284.00,132.6 284.17,138.9 284.33,143.8 284.50,146.8 284.67,147.6 284.83,146.6 285.00,144.6 285.17,143.2 285.33,142.2 285.50,141.3 285.67,140.8 285.83,140.6 286.00,140.7 286.17,141.1 286.33,141.5 286.50,142.0 286.67,142.4 286.83,142.4 287.00,142.1 287.17,140.3 287.33,136.8 287.50,132.0 287.67,126.7 287.83,121.8 288.00,118.4 288.17,117.3 288.33,118.5 288.50,121.9 288.67,126.7 288.83,131.9 289.00,135.9 289.17,138.0 289.33,139.7 289.50,141.0 289.67,141.7 289.83,142.0 290.00,141.9 290.17,141.6 290.33,141.2 290.50,140.7 290.67,140.3 290.83,140.1 291.00,140.3 291.17,141.3 291.33,143.0 291.50,144.7 291.67,145.9 291.83,145.9 292.00,144.1 292.17,140.6 292.33,135.8 292.50,130.4 292.67,125.4 292.83,121.7 293.00,120.2 293.17,119.7 293.33,119.8 293.50,120.5 293.67,121.6 293.83,123.2 294.00,125.0 294.17,127.0 294.33,129.0 294.50,130.9 294.67,132.7 294.83,134.1 295.00,135.8 295.17,136.6 295.33,136.7 295.50,136.5 295.67,136.6 295.83,137.4 296.00,139.1 296.17,141.6 296.33,144.3 296.50,146.6 296.67,147.8 296.83,147.6 297.00,146.8 297.17,145.5 297.33,143.7 297.50,141.6 297.67,139.1 297.83,136.6 298.00,134.0 298.17,131.5 298.33,129.2 298.50,127.2 298.67,125.6 298.83,124.1 299.00,123.4 299.17,124.2 299.33,125.9 299.50,128.2 299.67,130.2 299.83,131.7 300.00,132.5 300.17,132.6 300.33,132.3 300.50,132.2 300.67,132.7 300.83,133.6 301.00,134.6 301.17,135.9 301.33,137.3 301.50,139.0 301.67,140.7 301.83,142.4 302.00,144.0 302.17,145.5 302.33,146.6 302.50,147.4 302.67,147.8 302.83,147.6 303.00,145.9 303.17,142.9 303.33,139.1 303.50,135.2 303.67,131.7 303.83,129.1 304.00,127.7 304.17,127.4 304.33,128.0 304.50,129.0 304.67,130.0 304.83,130.5 305.00,130.8 305.17,130.9 305.33,130.8 305.50,130.6 305.67,130.3 305.83,130.0 306.00,129.6 306.17,129.3 306.33,129.1 306.50,129.0 306.67,129.2 306.83,130.3 307.00,132.3 307.17,135.2 307.33,138.5 307.50,141.8 307.67,144.5 307.83,146.3 308.00,146.7 308.17,145.9 308.33,143.9 308.50,141.2 308.67,138.7 308.83,137.2 309.00,135.8 309.17,134.5 309.33,133.4 309.50,132.6 309.67,132.0 309.83,131.6 310.00,131.4 310.17,131.4 310.33,131.5 310.50,131.7 310.67,131.9 310.83,132.1 311.00,132.0 311.17,131.3 311.33,130.2 311.50,128.9 311.67,127.8 311.83,127.2 312.00,127.3 312.17,128.5 312.33,130.5 312.50,133.3 312.67,135.3 312.83,136.9 313.00,138.5 313.17,140.0 313.33,141.4 313.50,142.5 313.67,143.4 313.83,144.0 314.00,144.3 314.17,144.3 314.33,144.1 314.50,143.6 314.67,142.3 314.83,140.5 315.00,138.6 315.17,136.9 315.33,135.7 315.50,135.0 315.67,134.8 315.83,134.8 316.00,134.9 316.17,134.8 316.33,134.2 316.50,133.3 316.67,132.6 316.83,131.8 317.00,131.0 317.17,130.1 317.33,129.3 317.50,128.5 317.67,127.9 317.83,127.3 318.00,127.0 318.17,126.8 318.33,126.9 318.50,127.3 318.67,128.6 318.83,130.6 319.00,133.0 319.17,135.6 319.33,138.0 319.50,139.9 319.67,141.0 319.83,141.5 320.00,141.3 320.17,140.5 320.33,139.5 320.50,138.7 320.67,138.2 320.83,137.8 321.00,137.5 321.17,137.2 321.33,137.0 321.50,137.0 321.67,137.0 321.83,137.0 322.00,137.1 322.17,137.2 322.33,137.3 322.50,137.3 322.67,137.0 322.83,136.3 323.00,135.2 323.17,133.7 323.33,132.0 323.50,130.3 323.67,128.8 323.83,127.9 324.00,127.6 324.17,127.9 324.33,129.0 324.50,129.7 324.67,130.6 324.83,131.5 325.00,132.5 325.17,133.4 325.33,134.4 325.50,135.3 325.67,136.1 325.83,136.8 326.00,137.4 326.17,137.8 326.33,138.2 326.50,138.5 326.67,138.5 326.83,138.1 327.00,137.7 327.17,137.4 327.33,137.2 327.50,137.3 327.67,137.5 327.83,137.9 328.00,138.3 328.17,138.6 328.33,138.6 328.50,138.5 328.67,138.2 328.83,137.9 329.00,137.5 329.17,136.9 329.33,136.3 329.50,135.6 329.67,134.9 329.83,134.2 330.00,133.4 330.17,132.7 330.33,131.6 330.50,130.5 330.67,129.7 330.83,129.4 331.00,129.6 331.17,130.3 331.33,131.2 331.50,132.4 331.67,133.5 331.83,134.5 332.00,135.4 332.17,135.9 332.33,136.1 332.50,136.2 332.67,136.2 332.83,136.2 333.00,136.2 333.17,136.1 333.33,136.1 333.50,136.0 333.67,136.0 333.83,136.0 334.00,136.0 334.17,136.1 334.33,136.4 334.50,136.8 334.67,137.3 334.83,137.8 335.00,138.3 335.17,138.5 335.33,138.5 335.50,138.2 335.67,137.6 335.83,136.7 336.00,135.6 336.17,134.6 336.33,134.0 336.50,133.5 336.67,133.0 336.83,132.6 337.00,132.3 337.17,132.0 337.33,131.8 337.50,131.7 337.67,131.6 337.83,131.7 338.00,131.7 338.17,131.9 338.33,132.4 338.50,132.9 338.67,133.4 338.83,133.9 339.00,134.3 339.17,134.6 339.33,134.8 339.50,134.8 339.67,134.8 339.83,134.7 340.00,134.8 340.17,134.9 340.33,134.9 340.50,135.1 340.67,135.2 340.83,135.4 341.00,135.6 341.17,135.8 341.33,136.0 341.50,136.2 341.67,136.4 341.83,136.7 342.00,136.9 342.17,137.2 342.33,137.4 342.50,137.5 342.67,137.4 342.83,137.1 343.00,136.7 343.17,136.1 343.33,135.5 343.50,134.9 343.67,134.4 343.83,133.9 344.00,133.6 344.17,133.6 344.33,133.5 344.50,133.5 344.67,133.5 344.83,133.6 345.00,133.6 345.17,133.7 345.33,133.8 345.50,133.9 345.67,134.0 345.83,134.1 346.00,134.2 346.17,134.3 346.33,134.5 346.50,134.5 346.67,134.5 346.83,134.5 347.00,134.4 347.17,134.4 347.33,134.4 347.50,134.5 347.67,134.6 347.83,134.8 348.00,135.0 348.17,135.1 348.33,135.2 348.50,135.3 348.67,135.5 348.83,135.6 349.00,135.7 349.17,135.7 349.33,135.8 349.50,135.8 349.67,135.9 349.83,135.9 350.00,135.9 350.17,135.9 350.33,135.8 350.50,135.7 350.67,135.5 350.83,135.3 351.00,135.2 351.17,135.0 351.33,134.9 351.50,134.8 351.67,134.8 351.83,134.8 352.00,134.8 352.17,134.8 352.33,134.8 352.50,134.9 352.67,134.9 352.83,134.9 353.00,134.9 353.17,134.9 353.33,134.9 353.50,135.0 353.67,135.0 353.83,135.0 354.00,135.0" fill="none" stroke="#1ff01f" stroke-width="1" shape-rendering="crispEdges"/><path d="M0 135.5H354" stroke="#a0dca0" stroke-width="1" opacity=".42"/><path d="M0.5 0V270" stroke="#7fdcec" stroke-width="1"/></svg></div>
<div class="ttl" style="left:972px;top:641px">Gap off</div>
<div class="nb" style="left:1203px;top:636px;width:17px;height:21px"><b style="line-height:19px;">1x</b></div>
<div class="nb" style="left:1225px;top:636px;width:17px;height:21px"><b style="line-height:19px;">2x</b></div>
<div class="nb" style="left:1247px;top:636px;width:17px;height:21px"><b style="line-height:19px;">4x</b></div>
<div class="nb" style="left:1269px;top:636px;width:13px;height:21px"><b style="line-height:19px;">S</b></div>
<div class="nb" style="left:1287px;top:636px;width:36px;height:21px"><b style="right:auto;width:19px;color:#000;text-shadow:none;text-align:left;padding-left:1px;line-height:19px;border-radius:3px">M<span style="letter-spacing:-1px">...</span></b><b style="left:24px;right:2px;border-radius:3px"></b><svg class="a" style="left:26px;top:8px" width="7" height="4" viewBox="0 0 7 4"><path d="M0 0h7L3.5 3.6z" fill="#000"/></svg></div>
<div class="g" style="left:972px;top:663px"><svg width="354" height="270" viewBox="0 0 354 270" shape-rendering="crispEdges"><path d="M0 135.5H354" stroke="#808080" stroke-width="1"/><polyline points="0.5,135.5 144.5,93.5 203.5,64.5 286.5,89.5 354.5,134.5" fill="none" stroke="#e8e888" stroke-width="1"/><use href="#xm" x="0" y="135"/><use href="#xm" x="144" y="93"/><use href="#xm" x="203" y="64"/><use href="#xm" x="286" y="89"/><use href="#xm" x="354" y="134"/></svg></div>
<div class="ttl" style="left:1562px;top:641px">Gap on</div>
<div class="nb" style="left:1793px;top:636px;width:17px;height:21px"><b style="line-height:19px;">1x</b></div>
<div class="nb" style="left:1815px;top:636px;width:17px;height:21px"><b style="line-height:19px;">2x</b></div>
<div class="nb" style="left:1837px;top:636px;width:17px;height:21px"><b style="line-height:19px;">4x</b></div>
<div class="nb" style="left:1859px;top:636px;width:13px;height:21px"><b style="line-height:19px;">S</b></div>
<div class="nb" style="left:1877px;top:636px;width:36px;height:21px"><b style="right:auto;width:19px;color:#000;text-shadow:none;text-align:left;padding-left:1px;line-height:19px;border-radius:3px">M<span style="letter-spacing:-1px">...</span></b><b style="left:24px;right:2px;border-radius:3px"></b><svg class="a" style="left:26px;top:8px" width="7" height="4" viewBox="0 0 7 4"><path d="M0 0h7L3.5 3.6z" fill="#000"/></svg></div>
<div class="g" style="left:1562px;top:663px"><svg width="354" height="270" viewBox="0 0 354 270" shape-rendering="crispEdges"><path d="M0 135.5H354" stroke="#808080" stroke-width="1"/><polyline points="0.5,201.5 88.5,132.5 184.5,75.5 262.5,135.5 354.5,135.5" fill="none" stroke="#e8e888" stroke-width="1"/><use href="#xm" x="0" y="201"/><use href="#xm" x="88" y="132"/><use href="#xm" x="184" y="75"/><use href="#xm" x="262" y="135"/><use href="#xm" x="354" y="135"/></svg></div>
<div class="btn" style="left:677px;top:26px;width:58px">Off</div>
<div class="btn on" style="left:677px;top:50px;width:58px">Sqr</div>
<div class="btn" style="left:677px;top:74px;width:58px">Sin</div>
<div class="btn" style="left:677px;top:98px;width:58px">Saw</div>
<div class="btn" style="left:677px;top:122px;width:58px">Noise</div>
<div class="box" style="left:677px;top:146px;width:58px;height:57px"></div>
<div class="lbl" style="left:681px;top:152px;">Min Hz</div>
<div class="sp" style="left:681px;top:179px;width:50px"><div class="f" style="width:29px">0</div><div class="b" style="left:33px"><i></i><u></u><s></s></div></div>
<div class="box" style="left:677px;top:205px;width:58px;height:58px"></div>
<div class="lbl" style="left:681px;top:211px;">Max Hz</div>
<div class="sp" style="left:681px;top:239px;width:50px"><div class="f" style="width:29px">150</div><div class="b" style="left:33px"><i></i><u></u><s></s></div></div>
<div class="box" style="left:677px;top:265px;width:58px;height:57px"></div>
<div class="lbl" style="left:681px;top:271px;">Av Hz</div>
<div class="tf" style="left:681px;top:300px;width:50px">75</div>
<div class="btn on" style="left:677px;top:330px;width:58px">Off</div>
<div class="btn" style="left:677px;top:354px;width:58px">Sqr</div>
<div class="btn" style="left:677px;top:378px;width:58px">Sin</div>
<div class="btn" style="left:677px;top:402px;width:58px">Saw</div>
<div class="btn" style="left:677px;top:426px;width:58px">Noise</div>
<div class="box" style="left:677px;top:450px;width:58px;height:57px"></div>
<div class="lbl" style="left:681px;top:456px;">Min Hz</div>
<div class="sp" style="left:681px;top:483px;width:50px"><div class="f" style="width:29px">0</div><div class="b" style="left:33px"><i></i><u></u><s></s></div></div>
<div class="box" style="left:677px;top:509px;width:58px;height:58px"></div>
<div class="lbl" style="left:681px;top:515px;">Max Hz</div>
<div class="sp" style="left:681px;top:543px;width:50px"><div class="f" style="width:29px">100</div><div class="b" style="left:33px"><i></i><u></u><s></s></div></div>
<div class="box" style="left:677px;top:569px;width:58px;height:57px"></div>
<div class="lbl" style="left:681px;top:575px;">Av Hz</div>
<div class="tf" style="left:681px;top:604px;width:50px">50</div>
<div class="btn on" style="left:677px;top:663px;width:58px">Off</div>
<div class="btn" style="left:677px;top:687px;width:58px">On</div>
<div class="box" style="left:677px;top:711px;width:58px;height:62px"></div>
<div class="lbl" style="left:681px;top:717px;">Min Gap</div>
<div class="sp" style="left:681px;top:749px;width:50px"><div class="f" style="width:29px">1</div><div class="b" style="left:33px"><i></i><u></u><s></s></div></div>
<div class="box" style="left:677px;top:775px;width:58px;height:62px"></div>
<div class="lbl" style="left:681px;top:781px;">Max Gap</div>
<div class="sp" style="left:681px;top:813px;width:50px"><div class="f" style="width:29px">688</div><div class="b" style="left:33px"><i></i><u></u><s></s></div></div>
<div class="box" style="left:677px;top:839px;width:58px;height:60px"></div>
<div class="lbl" style="left:681px;top:845px;">Av Gap</div>
<div class="tf" style="left:681px;top:877px;width:50px">344</div>
<div class="lbl" style="left:122px;top:943px;letter-spacing:0.18px">Editing Tone</div>
<div class="a" style="left:4px;top:957px;width:271px;height:22px;background:#353535"></div>
<div class="btn on" style="left:5px;top:957px;width:26px">1</div>
<div class="btn" style="left:32px;top:957px;width:26px">2</div>
<div class="btn" style="left:59px;top:957px;width:26px">3</div>
<div class="btn" style="left:86px;top:957px;width:26px">4</div>
<div class="btn" style="left:113px;top:957px;width:26px">5</div>
<div class="btn" style="left:140px;top:957px;width:26px">6</div>
<div class="btn" style="left:167px;top:957px;width:26px">7</div>
<div class="btn" style="left:194px;top:957px;width:26px">8</div>
<div class="btn" style="left:221px;top:957px;width:26px">9</div>
<div class="btn" style="left:248px;top:957px;width:26px">10</div>
<div class="nb" style="left:275px;top:957px;width:33px;height:21px"><b style="line-height:19px;">Copy</b></div>
<div class="nb" style="left:121px;top:1009px;width:71px;height:21px"><b style="line-height:19px;">Reset Active</b></div>
<div class="box" style="left:748px;top:944px;width:90px;height:88px"></div>
<div class="lbl" style="left:748px;top:952px;width:90px;text-align:center">Harmonic 1</div>
<div class="lbl" style="left:752px;top:972px;">Semi:</div>
<div class="sp" style="left:784px;top:968px;width:50px"><div class="f" style="width:29px">0</div><div class="b" style="left:33px"><i></i><u></u><s></s></div></div>
<div class="lbl" style="left:752px;top:992px;">Vol:</div>
<div class="sp" style="left:784px;top:988px;width:50px"><div class="f" style="width:29px">80</div><div class="b" style="left:33px"><i></i><u></u><s></s></div></div>
<div class="lbl" style="left:752px;top:1012px;">Del:</div>
<div class="sp" style="left:784px;top:1008px;width:50px"><div class="f" style="width:29px">0</div><div class="b" style="left:33px"><i></i><u></u><s></s></div></div>
<div class="box" style="left:843px;top:944px;width:90px;height:88px"></div>
<div class="lbl" style="left:843px;top:952px;width:90px;text-align:center">Harmonic 2</div>
<div class="lbl" style="left:847px;top:972px;">Semi:</div>
<div class="sp" style="left:879px;top:968px;width:50px"><div class="f" style="width:29px">13.3</div><div class="b" style="left:33px"><i></i><u></u><s></s></div></div>
<div class="lbl" style="left:847px;top:992px;">Vol:</div>
<div class="sp" style="left:879px;top:988px;width:50px"><div class="f" style="width:29px">40</div><div class="b" style="left:33px"><i></i><u></u><s></s></div></div>
<div class="lbl" style="left:847px;top:1012px;">Del:</div>
<div class="sp" style="left:879px;top:1008px;width:50px"><div class="f" style="width:29px">0</div><div class="b" style="left:33px"><i></i><u></u><s></s></div></div>
<div class="box" style="left:938px;top:944px;width:90px;height:88px"></div>
<div class="lbl" style="left:938px;top:952px;width:90px;text-align:center">Harmonic 3</div>
<div class="lbl" style="left:942px;top:972px;">Semi:</div>
<div class="sp" style="left:974px;top:968px;width:50px"><div class="f" style="width:29px">0</div><div class="b" style="left:33px"><i></i><u></u><s></s></div></div>
<div class="lbl" style="left:942px;top:992px;">Vol:</div>
<div class="sp" style="left:974px;top:988px;width:50px"><div class="f" style="width:29px">0</div><div class="b" style="left:33px"><i></i><u></u><s></s></div></div>
<div class="lbl" style="left:942px;top:1012px;">Del:</div>
<div class="sp" style="left:974px;top:1008px;width:50px"><div class="f" style="width:29px">0</div><div class="b" style="left:33px"><i></i><u></u><s></s></div></div>
<div class="box" style="left:1033px;top:944px;width:90px;height:88px"></div>
<div class="lbl" style="left:1033px;top:952px;width:90px;text-align:center">Harmonic 4</div>
<div class="lbl" style="left:1037px;top:972px;">Semi:</div>
<div class="sp" style="left:1069px;top:968px;width:50px"><div class="f" style="width:29px">0</div><div class="b" style="left:33px"><i></i><u></u><s></s></div></div>
<div class="lbl" style="left:1037px;top:992px;">Vol:</div>
<div class="sp" style="left:1069px;top:988px;width:50px"><div class="f" style="width:29px">0</div><div class="b" style="left:33px"><i></i><u></u><s></s></div></div>
<div class="lbl" style="left:1037px;top:1012px;">Del:</div>
<div class="sp" style="left:1069px;top:1008px;width:50px"><div class="f" style="width:29px">0</div><div class="b" style="left:33px"><i></i><u></u><s></s></div></div>
<div class="box" style="left:1128px;top:944px;width:90px;height:88px"></div>
<div class="lbl" style="left:1128px;top:952px;width:90px;text-align:center">Harmonic 5</div>
<div class="lbl" style="left:1132px;top:972px;">Semi:</div>
<div class="sp" style="left:1164px;top:968px;width:50px"><div class="f" style="width:29px">0</div><div class="b" style="left:33px"><i></i><u></u><s></s></div></div>
<div class="lbl" style="left:1132px;top:992px;">Vol:</div>
<div class="sp" style="left:1164px;top:988px;width:50px"><div class="f" style="width:29px">0</div><div class="b" style="left:33px"><i></i><u></u><s></s></div></div>
<div class="lbl" style="left:1132px;top:1012px;">Del:</div>
<div class="sp" style="left:1164px;top:1008px;width:50px"><div class="f" style="width:29px">0</div><div class="b" style="left:33px"><i></i><u></u><s></s></div></div>
<div class="box" style="left:1223px;top:954px;width:120px;height:68px"></div>
<div class="lbl" style="left:1223px;top:962px;width:120px;text-align:center">Reverb</div>
<div class="lbl" style="left:1227px;top:982px;">Reverb vol:</div>
<div class="lbl" style="left:1227px;top:1002px;">Reverb del:</div>
<div class="sp" style="left:1289px;top:978px;width:50px"><div class="f" style="width:29px">100</div><div class="b" style="left:33px"><i></i><u></u><s></s></div></div>
<div class="sp" style="left:1289px;top:998px;width:50px"><div class="f" style="width:29px">0</div><div class="b" style="left:33px"><i></i><u></u><s></s></div></div>
<div class="lbl" style="left:1833px;top:958px;">Mode</div>
<div class="a" style="left:1797px;top:998px;width:102px;height:22px;background:#353535"></div>
<div class="btn on" style="left:1798px;top:998px;width:33px">Main</div>
<div class="btn" style="left:1832px;top:998px;width:33px">Filter</div>
<div class="btn" style="left:1866px;top:998px;width:33px">Both</div>
</body></html>
